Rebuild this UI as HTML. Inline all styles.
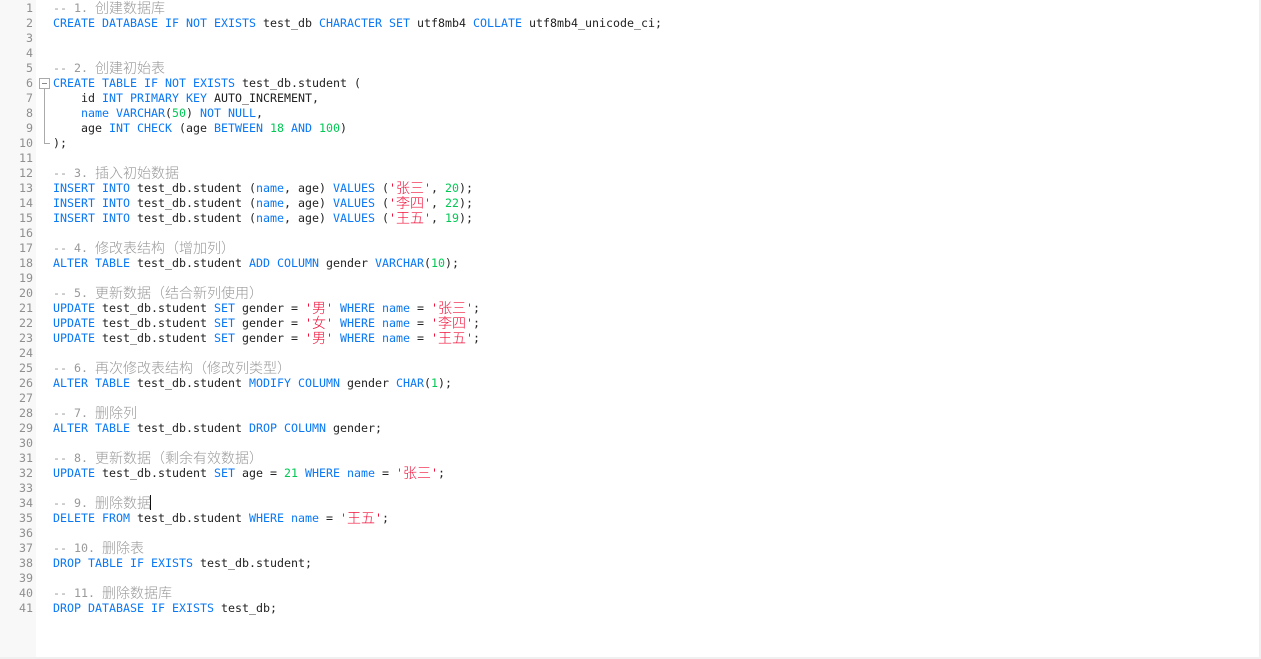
<!DOCTYPE html>
<html lang="zh">
<head>
<meta charset="utf-8">
<title>SQL</title>
<style>
html,body{margin:0;padding:0;background:#fff;width:1261px;height:659px;overflow:hidden}
#g{position:absolute;left:0;top:0;width:36px;height:657px;background:#f8f8f8}
#n{position:absolute;left:0;top:1px;width:33px;height:656px;overflow:hidden;text-align:right;color:#8f8f8f}
#c{position:absolute;left:53px;top:0;width:1200px;height:657px;overflow:hidden;color:#222}
#n,#c{font:11.63px/15px "DejaVu Sans Mono",monospace}
#c div,#n div{height:15px;white-space:pre;overflow:visible}
#c div:not(:has(em)){position:relative;top:1px}
i,b,u,s,em{font-style:normal;font-weight:normal;text-decoration:none}
i{color:#0a78f5}
b{color:#00c853}
u{color:#f0103a}
s{color:#999}
em{font-family:"Noto Sans CJK SC","WenQuanYi Zen Hei",sans-serif;font-size:14px;line-height:15px;font-weight:300;position:relative;top:1px}
#r{position:absolute;right:0;top:0;width:2px;height:659px;background:#f0f0f0}
#bt{position:absolute;left:0;top:657px;width:1261px;height:2px;background:#f0f0f0}
#caret{position:absolute;left:150px;top:495px;width:1px;height:15px;background:#111}
#fold{position:absolute;left:39px;top:78px;width:9px;height:9px;border:1px solid #aaa;background:#fff}
#fold:after{content:"";position:absolute;left:2px;top:4px;width:5px;height:1px;background:#888}
#fl{position:absolute;left:44px;top:89px;width:5px;height:54px;border-left:1px solid #aaa;border-bottom:1px solid #aaa}
</style>
</head>
<body>
<div id="g"></div>
<div id="n"><div>1</div><div>2</div><div>3</div><div>4</div><div>5</div><div>6</div><div>7</div><div>8</div><div>9</div><div>10</div><div>11</div><div>12</div><div>13</div><div>14</div><div>15</div><div>16</div><div>17</div><div>18</div><div>19</div><div>20</div><div>21</div><div>22</div><div>23</div><div>24</div><div>25</div><div>26</div><div>27</div><div>28</div><div>29</div><div>30</div><div>31</div><div>32</div><div>33</div><div>34</div><div>35</div><div>36</div><div>37</div><div>38</div><div>39</div><div>40</div><div>41</div></div>
<div id="fold"></div><div id="fl"></div>
<div id="c">
<div><s>-- 1. <em>创建数据库</em></s></div>
<div><i>CREATE DATABASE IF NOT EXISTS</i> test_db <i>CHARACTER SET</i> utf8mb4 <i>COLLATE</i> utf8mb4_unicode_ci;</div>
<div></div>
<div></div>
<div><s>-- 2. <em>创建初始表</em></s></div>
<div><i>CREATE TABLE IF NOT EXISTS</i> test_db.student (</div>
<div>    id <i>INT PRIMARY KEY</i> AUTO_INCREMENT,</div>
<div>    <i>name VARCHAR</i>(<b>50</b>) <i>NOT NULL</i>,</div>
<div>    age <i>INT CHECK</i> (age <i>BETWEEN</i> <b>18</b> <i>AND</i> <b>100</b>)</div>
<div>);</div>
<div></div>
<div><s>-- 3. <em>插入初始数据</em></s></div>
<div><i>INSERT INTO</i> test_db.student (<i>name</i>, age) <i>VALUES</i> (<u>'<em>张三</em>'</u>, <b>20</b>);</div>
<div><i>INSERT INTO</i> test_db.student (<i>name</i>, age) <i>VALUES</i> (<u>'<em>李四</em>'</u>, <b>22</b>);</div>
<div><i>INSERT INTO</i> test_db.student (<i>name</i>, age) <i>VALUES</i> (<u>'<em>王五</em>'</u>, <b>19</b>);</div>
<div></div>
<div><s>-- 4. <em>修改表结构（增加列）</em></s></div>
<div><i>ALTER TABLE</i> test_db.student <i>ADD COLUMN</i> gender <i>VARCHAR</i>(<b>10</b>);</div>
<div></div>
<div><s>-- 5. <em>更新数据（结合新列使用）</em></s></div>
<div><i>UPDATE</i> test_db.student <i>SET</i> gender = <u>'<em>男</em>'</u> <i>WHERE name</i> = <u>'<em>张三</em>'</u>;</div>
<div><i>UPDATE</i> test_db.student <i>SET</i> gender = <u>'<em>女</em>'</u> <i>WHERE name</i> = <u>'<em>李四</em>'</u>;</div>
<div><i>UPDATE</i> test_db.student <i>SET</i> gender = <u>'<em>男</em>'</u> <i>WHERE name</i> = <u>'<em>王五</em>'</u>;</div>
<div></div>
<div><s>-- 6. <em>再次修改表结构（修改列类型）</em></s></div>
<div><i>ALTER TABLE</i> test_db.student <i>MODIFY COLUMN</i> gender <i>CHAR</i>(<b>1</b>);</div>
<div></div>
<div><s>-- 7. <em>删除列</em></s></div>
<div><i>ALTER TABLE</i> test_db.student <i>DROP COLUMN</i> gender;</div>
<div></div>
<div><s>-- 8. <em>更新数据（剩余有效数据）</em></s></div>
<div><i>UPDATE</i> test_db.student <i>SET</i> age = <b>21</b> <i>WHERE name</i> = <u>'<em>张三</em>'</u>;</div>
<div></div>
<div><s>-- 9. <em>删除数据</em></s></div>
<div><i>DELETE FROM</i> test_db.student <i>WHERE name</i> = <u>'<em>王五</em>'</u>;</div>
<div></div>
<div><s>-- 10. <em>删除表</em></s></div>
<div><i>DROP TABLE IF EXISTS</i> test_db.student;</div>
<div></div>
<div><s>-- 11. <em>删除数据库</em></s></div>
<div><i>DROP DATABASE IF EXISTS</i> test_db;</div>
</div>
<div id="caret"></div>
<div id="r"></div>
<div id="bt"></div>
</body>
</html>
